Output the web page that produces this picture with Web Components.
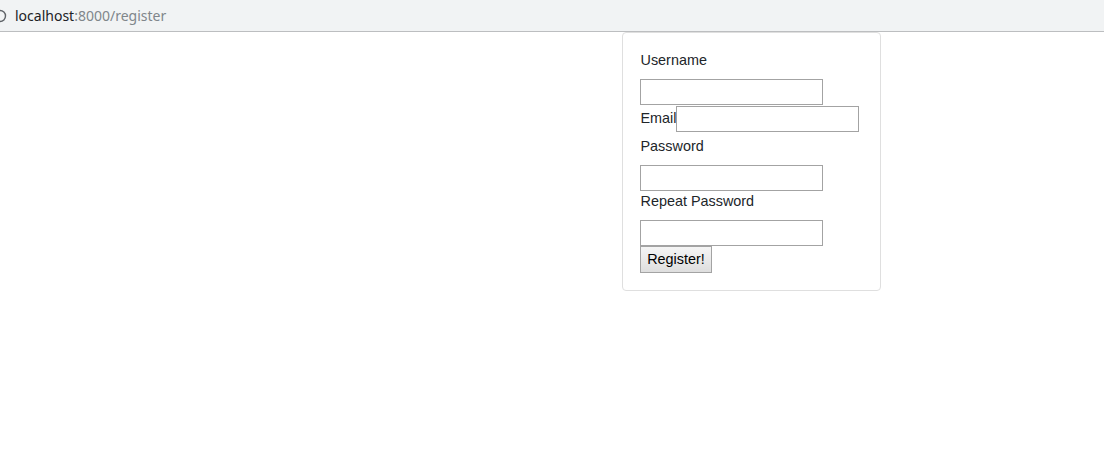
<!DOCTYPE html>
<html>
<head>
<meta charset="utf-8">
<title>Register</title>
<style>
html, body { margin: 0; padding: 0; background: #fff; }
body { font-family: "Liberation Sans", Arial, sans-serif; }
</style>
</head>
<body>
<browser-bar host="localhost" path=":8000/register"></browser-bar>
<register-card>
  <form-row label="Username"></form-row>
  <form-row label="Email" inline></form-row>
  <form-row label="Password" gap="3.5"></form-row>
  <form-row label="Repeat Password"></form-row>
  <reg-button>Register!</reg-button>
</register-card>
<script>
customElements.define('browser-bar', class extends HTMLElement {
  constructor() {
    super();
    this.attachShadow({ mode: 'open' }).innerHTML = `
<style>
:host {
  display: flex;
  align-items: center;
  box-sizing: border-box;
  height: 32px;
  background: #f1f3f4;
  border-bottom: 1px solid #bcbec0;
  font: 14px "Noto Sans", sans-serif;
  overflow: hidden;
}
svg { flex: none; margin-left: -7px; margin-right: 8px; }
.host { color: #202124; }
.path { color: #80868b; }
</style>
<svg width="14" height="14" viewBox="0 0 14 14"><circle cx="7" cy="7" r="5.5" fill="none" stroke="#5f6368" stroke-width="1.4"/></svg>
<span><span class="host"></span><span class="path"></span></span>`;
    this.shadowRoot.querySelector('.host').textContent = this.getAttribute('host');
    this.shadowRoot.querySelector('.path').textContent = this.getAttribute('path');
  }
});

customElements.define('register-card', class extends HTMLElement {
  constructor() {
    super();
    this.attachShadow({ mode: 'open' }).innerHTML = `
<style>
:host {
  display: block;
  box-sizing: border-box;
  width: 259px;
  height: 259px;
  margin-left: 622px;
  padding: 17px;
  background: #fff;
  border: 1px solid #dfdfdf;
  border-radius: 4px;
  font-size: 14.4px;
  color: #212529;
}
</style>
<slot></slot>`;
  }
});

customElements.define('form-row', class extends HTMLElement {
  constructor() {
    super();
    this.attachShadow({ mode: 'open' }).innerHTML = `
<style>
:host { display: flex; flex-direction: column; align-items: flex-start; }
:host([inline]) { flex-direction: row; align-items: center; height: 27px; }
label { display: block; line-height: 21px; margin: 0 0 8px 0.5px; }
:host([inline]) label { margin: 0 0 0 0.5px; }
input {
  display: block;
  box-sizing: border-box;
  width: 183px;
  height: 26px;
  margin: 0;
  padding: 1px 2px;
  background: #fff;
  border: 1px solid #a3a3a3;
  border-radius: 0;
  outline: none;
}
</style>
<label></label><input type="text">`;
    this.shadowRoot.querySelector('label').textContent = this.getAttribute('label');
    const gap = this.getAttribute('gap');
    if (gap) this.style.paddingTop = gap + 'px';
  }
});

customElements.define('reg-button', class extends HTMLElement {
  constructor() {
    super();
    this.attachShadow({ mode: 'open' }).innerHTML = `
<style>
:host { display: block; }
button {
  display: block;
  box-sizing: border-box;
  width: 72px;
  height: 27px;
  margin: 0;
  padding: 0;
  background: linear-gradient(#f5f5f5, #dedede);
  border: 1px solid #a3a3a3;
  border-radius: 0;
  font: 14.4px "Liberation Sans", sans-serif;
  color: #000;
}
</style>
<button type="button"><slot></slot></button>`;
  }
});
</script>
</body>
</html>
